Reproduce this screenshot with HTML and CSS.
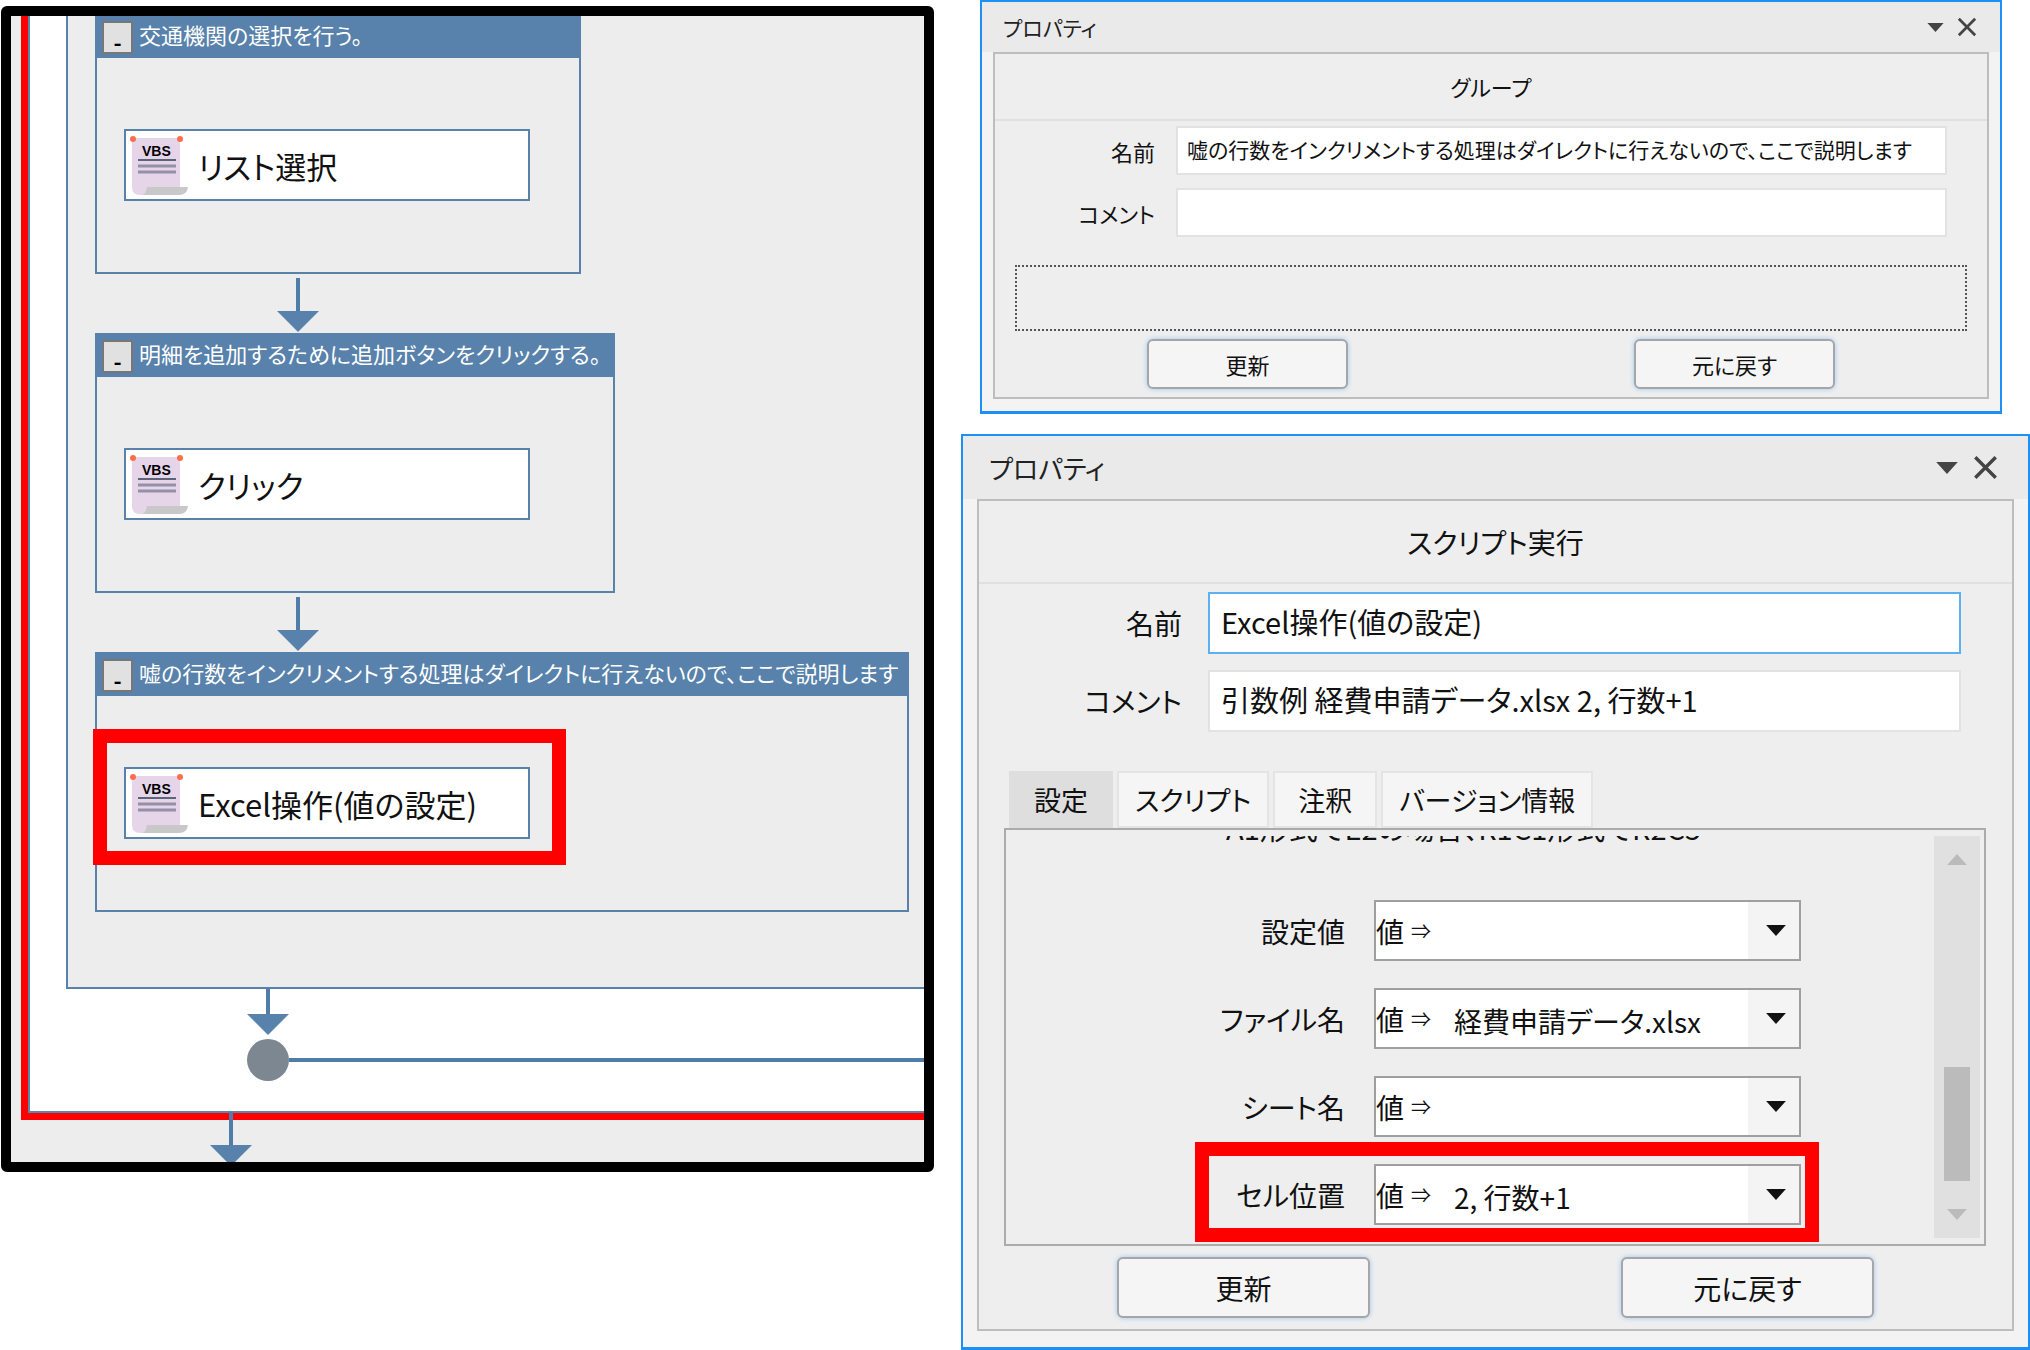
FILE: index.html
```html
<!DOCTYPE html>
<html lang="ja">

<head>
	<meta charset="utf-8">
	<meta name="viewport" content="width=device-width, initial-scale=1.0">
	<title>プロパティ</title>
	<link rel="stylesheet" href="styles.css">
</head>

<body>
	<svg class="defs" width="0" height="0" aria-hidden="true">
		<symbol id="vbs" viewBox="0 0 60 62">
			<path d="M3 4h48v49H22q-2 0-4 5-2 3-7 3-8 0-8-8z" fill="#e6d5e8" />
			<path d="M18 53h41q-1 8-9 8H11q5 0 6-4z" fill="#c8c8c8" />
			<text x="13" y="22" class="vbs-text">VBS</text>
			<path d="M9 26h38" stroke="#5b6478" stroke-width="2" />
			<path d="M9 32h38M9 38h38" stroke="#9490a8" stroke-width="3" />
			<circle cx="4" cy="5" r="3" fill="#ff6e4a" />
			<circle cx="51" cy="5" r="3" fill="#ff6e4a" />
		</symbol>
		<symbol id="arrow" viewBox="0 0 42 54">
			<path d="M21 0v34" stroke="#4f7ca8" stroke-width="4" />
			<path d="M0 33h42L21 54z" fill="#5882ab" />
		</symbol>
		<symbol id="down" viewBox="0 0 18 10">
			<path d="M0 0h18L9 10z" fill="currentColor" />
		</symbol>
		<symbol id="cross" viewBox="0 0 22 22">
			<path d="M2 2l18 18M20 2L2 20" stroke="currentColor" stroke-width="3" />
		</symbol>
	</svg>

	<main class="page">
		<section class="flow">
			<div class="loop">
				<div class="branch">
					<div class="group group-cut">
						<header><button>-</button><span>交通機関の選択を行う。</span></header>
						<div class="step"><svg class="icon"><use href="#vbs" /></svg>リスト選択</div>
					</div>
					<svg class="arrow"><use href="#arrow" /></svg>
					<div class="group group-mid">
						<header><button>-</button><span>明細を追加するために追加ボタンをクリックする。</span></header>
						<div class="step"><svg class="icon"><use href="#vbs" /></svg>クリック</div>
					</div>
					<svg class="arrow"><use href="#arrow" /></svg>
					<div class="group">
						<header><button>-</button><span>嘘の行数をインクリメントする処理はダイレクトに行えないので、ここで説明します</span></header>
						<div class="step marked"><svg class="icon"><use href="#vbs" /></svg>Excel操作(値の設定)</div>
					</div>
				</div>
				<svg class="arrow-end" viewBox="0 0 42 46">
					<path d="M21 0v26" stroke="#4f7ca8" stroke-width="4" />
					<path d="M0 25h42L21 46z" fill="#5882ab" />
				</svg>
				<div class="node"><i></i></div>
			</div>
			<svg class="arrow-out"><use href="#arrow" /></svg>
		</section>

		<div class="panels">
			<section class="panel small">
				<header class="bar">
					<h2>プロパティ</h2>
					<svg class="menu"><use href="#down" /></svg>
					<svg class="close"><use href="#cross" /></svg>
				</header>
				<form class="sheet">
					<h3>グループ</h3>
					<div class="fields">
						<label for="name1">名前</label>
						<input id="name1" type="text" value="嘘の行数をインクリメントする処理はダイレクトに行えないので、ここで説明します">
						<label for="comment1">コメント</label>
						<input id="comment1" type="text">
					</div>
					<div class="empty"></div>
					<div class="buttons">
						<button type="button">更新</button>
						<button type="button">元に戻す</button>
					</div>
				</form>
			</section>

			<section class="panel large">
				<header class="bar">
					<h2>プロパティ</h2>
					<svg class="menu"><use href="#down" /></svg>
					<svg class="close"><use href="#cross" /></svg>
				</header>
				<form class="sheet">
					<h3>スクリプト実行</h3>
					<div class="fields">
						<label for="name2">名前</label>
						<input id="name2" class="active" type="text" value="Excel操作(値の設定)">
						<label for="comment2">コメント</label>
						<input id="comment2" type="text" value="引数例 経費申請データ.xlsx 2, 行数+1">
					</div>
					<div class="tabs">
						<button type="button" class="on">設定</button>
						<button type="button">スクリプト</button>
						<button type="button">注釈</button>
						<button type="button">バージョン情報</button>
					</div>
					<div class="box">
						<div class="settings">
							<p class="hint"><span>A1形式でE2の場合、R1C1形式でR2C5</span></p>
							<div class="row">
								<label for="value">設定値</label>
								<div class="combo"><span>値<small>⇒</small></span><select id="value"><option></option></select><svg><use href="#down" /></svg></div>
							</div>
							<div class="row">
								<label for="file">ファイル名</label>
								<div class="combo"><span>値<small>⇒</small></span><select id="file"><option>経費申請データ.xlsx</option></select><svg><use href="#down" /></svg></div>
							</div>
							<div class="row">
								<label for="sheet">シート名</label>
								<div class="combo"><span>値<small>⇒</small></span><select id="sheet"><option></option></select><svg><use href="#down" /></svg></div>
							</div>
							<div class="row marked">
								<label for="cell">セル位置</label>
								<div class="combo"><span>値<small>⇒</small></span><select id="cell"><option>2, 行数+1</option></select><svg><use href="#down" /></svg></div>
							</div>
						</div>
						<div class="scroll">
							<svg class="up"><use href="#down" /></svg>
							<i></i>
							<svg><use href="#down" /></svg>
						</div>
					</div>
					<div class="buttons">
						<button type="button">更新</button>
						<button type="button">元に戻す</button>
					</div>
				</form>
			</section>
		</div>
	</main>
</body>

</html>
```
FILE: styles.css
```css
*,
*::after {
	margin: 0;
	padding: 0;
	box-sizing: border-box;
}

body {
	background: #fff;
	color: #111;
	font-family: "Noto Sans CJK JP", sans-serif;
	font-feature-settings: "palt";
	overflow: hidden;
}

button,
input,
select {
	font: inherit;
	font-feature-settings: inherit;
	color: inherit;
}

svg {
	display: block;
	flex: none;
}

.defs {
	position: absolute;
}

.vbs-text {
	font: bold 14px "Liberation Sans", sans-serif;
}

.page {
	display: grid;
	grid-template-columns: 933fr 1069fr;
	align-items: start;
	gap: 27px;
	padding-left: 1px;
}

/* flow chart */
.flow {
	min-width: 0;
	margin-top: 6px;
	height: 1166px;
	border: 10px solid #000;
	border-radius: 6px;
	background: #ededed;
	padding-left: 10px;
	overflow: hidden;
}

.loop {
	border: solid #f00;
	border-width: 0 0 7px 7px;
	background: #fff;
	box-shadow: inset 2px -2px #5a87b0;
	padding: 0 0 32px 38px;
}

.branch {
	border: solid #5882ab;
	border-width: 0 0 2px 2px;
	background: #ededed;
	padding: 0 15px 75px 27px;
}

.group {
	border: 2px solid #5882ab;
	height: 260px;
}

.group-cut {
	width: 486px;
	height: 258px;
	border-top: 0;
}

.group-mid {
	width: 520px;
}

.group header {
	height: 42px;
	background: #5882ab;
	color: #fff;
	display: flex;
	align-items: flex-start;
	gap: 6px;
	padding: 5px 0 0 5px;
	font-size: 22px;
	line-height: 26px;
	white-space: nowrap;
}

.group header button {
	flex: none;
	width: 31px;
	height: 33px;
	border: 2px solid #777;
	background: #e1e1e1;
	color: #000;
	font-weight: bold;
	line-height: 36px;
}

.step {
	position: relative;
	width: 406px;
	height: 72px;
	margin: 71px 0 0 27px;
	border: 2px solid #5882ab;
	background: #fff;
	display: flex;
	align-items: center;
	gap: 9px;
	padding-left: 3px;
	font-size: 31px;
}

.icon {
	width: 60px;
	height: 62px;
}

.step.marked::after {
	content: "";
	position: absolute;
	inset: -40px -38px -28px -33px;
	border: 14px solid #f00;
}

.arrow {
	width: 42px;
	height: 54px;
	margin: 4px 0 1px 182px;
}

.arrow-end {
	width: 42px;
	height: 46px;
	margin-left: 181px;
}

.node {
	display: flex;
	align-items: center;
	margin: 4px 0 0 181px;
}

.node i {
	width: 42px;
	height: 42px;
	border-radius: 50%;
	background: #7c8791;
}

.node::after {
	content: "";
	flex: 1;
	height: 4px;
	background: #4f7ca8;
}

.arrow-out {
	position: relative;
	width: 42px;
	height: 54px;
	margin: -8px 0 0 189px;
}

/* property windows */
.panels {
	min-width: 0;
	display: flex;
	flex-direction: column;
	gap: 20px;
}

.panel {
	border: 2px solid #1e90f5;
	border-bottom-width: 3px;
	background: #f3f3f3;
}

.bar {
	display: flex;
	align-items: center;
	background: #eaeaea;
	color: #444;
}

.bar h2 {
	flex: 1;
	color: #222;
	font-weight: normal;
}

.sheet {
	border: 2px solid #bdbdbd;
	background: #eee;
}

.sheet h3 {
	border-bottom: 2px solid #e0e0e0;
	font-size: inherit;
	font-weight: normal;
	text-align: center;
}

.fields {
	display: grid;
	align-items: center;
}

label {
	text-align: right;
}

.fields input {
	width: 100%;
	border: 2px solid #e2e2e2;
	background: #fff;
}

.fields .active {
	border-color: #5eb0f0;
}

.buttons {
	display: flex;
}

.buttons button {
	border: 2px solid #a6a6a6;
	border-radius: 6px;
	background: #f5f5f5;
	box-shadow: 0 0 5px #9cc8f5;
}

.small {
	margin: 0 28px 0 19px;
	font-size: 22px;
	line-height: 30px;
}

.small .bar {
	height: 50px;
	padding: 0 23px 0 21px;
	gap: 13px;
}

.small h2,
.small input {
	font-size: 21px;
}

.small .menu {
	width: 17px;
	height: 9px;
}

.small .close {
	width: 20px;
	height: 20px;
}

.small .sheet {
	height: 347px;
	margin: 0 11px 12px;
}

.small h3 {
	height: 67px;
	line-height: 64px;
}

.small .fields {
	grid-template-columns: 160px 1fr;
	gap: 13px 21px;
	padding: 5px 40px 0 0;
}

.small input {
	height: 49px;
	padding: 0 9px 4px;
}

.empty {
	height: 66px;
	margin: 28px 20px 0;
	border: 2px dotted #555;
}

.small .buttons {
	gap: 286px;
	padding: 8px 0 0 152px;
}

.small .buttons button {
	width: 201px;
	height: 50px;
}

.large {
	font-size: 28px;
	line-height: 36px;
}

.large .bar {
	height: 63px;
	padding: 0 30px 0 26px;
	gap: 15px;
}

.large h2 {
	font-size: 26px;
}

.large .menu {
	width: 22px;
	height: 12px;
}

.large .close {
	width: 25px;
	height: 25px;
}

.large .sheet {
	height: 832px;
	margin: 0 14px 16px;
}

.large h3 {
	height: 83px;
	line-height: 83px;
}

.tabs {
	font-size: 27px;
}

.large .fields {
	grid-template-columns: 203px 1fr;
	gap: 16px 26px;
	padding: 8px 51px 0 0;
}

.large input {
	height: 62px;
	padding: 0 11px 4px;
	font-size: 29px;
}

.tabs {
	display: flex;
	gap: 4px;
	padding: 39px 0 0 30px;
}

.tabs button {
	min-width: 104px;
	height: 57px;
	padding: 0 16px;
	border: 2px solid #e4e4e4;
	background: #f5f5f5;
}

.tabs .on {
	border-color: #dedede;
	background: #dedede;
}

.box {
	height: 418px;
	margin: 0 26px 0 25px;
	border: 2px solid #ababab;
	display: flex;
	justify-content: space-between;
	padding: 6px 4px;
}

.settings {
	flex: 1;
	display: flex;
	flex-direction: column;
	gap: 27px;
}

.hint {
	height: 37px;
	padding-left: 216px;
	font-size: 29px;
}

/* only the bottom edge of the scrolled line shows */
.hint span {
	display: flex;
	align-items: flex-end;
	height: 7px;
	overflow: hidden;
	white-space: nowrap;
	line-height: 32px;
}

.row {
	position: relative;
	display: grid;
	grid-template-columns: 335px 427px;
	gap: 29px;
	align-items: center;
}

.row.marked::after {
	content: "";
	position: absolute;
	top: -22px;
	bottom: -17px;
	left: 185px;
	width: 624px;
	border: 14px solid #f00;
	pointer-events: none;
}

.combo {
	position: relative;
	height: 61px;
	border: 2px solid #9f9f9f;
	background: linear-gradient(to left, #f4f4f4 51px, #fff 51px);
	display: flex;
	align-items: center;
}

.combo span {
	width: 78px;
	white-space: nowrap;
}

.combo small {
	font-size: 20px;
	vertical-align: 4px;
	margin-left: 7px;
}

.combo select {
	flex: 1;
	height: 100%;
	appearance: none;
	border: 0;
	background: none;
	padding-top: 4px;
}

.combo svg {
	position: absolute;
	right: 13px;
	top: 23px;
	width: 20px;
	height: 11px;
	pointer-events: none;
}

.scroll {
	width: 46px;
	background: #e0e0e0;
	color: #bbb;
	display: flex;
	flex-direction: column;
	align-items: center;
	padding: 18px 0;
}

.scroll svg {
	width: 20px;
	height: 11px;
}

.scroll .up {
	transform: rotate(180deg);
}

.scroll i {
	width: 26px;
	height: 114px;
	margin: auto 0 28px;
	background: #bbb;
}

.large .buttons {
	gap: 251px;
	padding: 11px 0 0 138px;
}

.large .buttons button {
	width: 253px;
	height: 61px;
}
```
